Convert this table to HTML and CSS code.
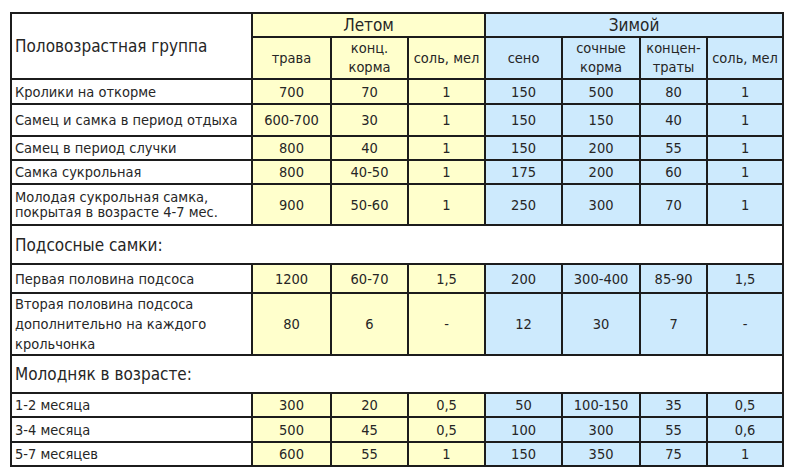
FILE: index.html
```html
<!DOCTYPE html>
<html lang="ru">
<head>
<meta charset="utf-8">
<title>Нормы кормления кроликов</title>
<link rel="stylesheet" href="styles.css">
</head>
<body>
<div class="page">
<table class="feed">
  <colgroup>
    <col class="c-group">
    <col class="c-w79">
    <col class="c-w77">
    <col class="c-w77">
    <col class="c-w77">
    <col class="c-w78">
    <col class="c-w67">
    <col class="c-w76">
  </colgroup>
  <tr class="r-season">
    <th rowspan="2" class="group-head">Половозрастная группа</th>
    <th colspan="3" class="summer season">Летом</th>
    <th colspan="4" class="winter season">Зимой</th>
  </tr>
  <tr class="r-sub">
    <th class="summer">трава</th>
    <th class="summer">конц.<br>корма</th>
    <th class="summer">соль, мел</th>
    <th class="winter">сено</th>
    <th class="winter">сочные<br>корма</th>
    <th class="winter">концен-<br>траты</th>
    <th class="winter">соль, мел</th>
  </tr>
  <tr class="r-25">
    <td class="name">Кролики на откорме</td>
    <td class="summer">700</td><td class="summer">70</td><td class="summer">1</td>
    <td class="winter">150</td><td class="winter">500</td><td class="winter">80</td><td class="winter">1</td>
  </tr>
  <tr class="r-32">
    <td class="name">Самец и самка в период отдыха</td>
    <td class="summer">600-700</td><td class="summer">30</td><td class="summer">1</td>
    <td class="winter">150</td><td class="winter">150</td><td class="winter">40</td><td class="winter">1</td>
  </tr>
  <tr class="r-24">
    <td class="name">Самец в период случки</td>
    <td class="summer">800</td><td class="summer">40</td><td class="summer">1</td>
    <td class="winter">150</td><td class="winter">200</td><td class="winter">55</td><td class="winter">1</td>
  </tr>
  <tr class="r-24">
    <td class="name">Самка сукрольная</td>
    <td class="summer">800</td><td class="summer">40-50</td><td class="summer">1</td>
    <td class="winter">175</td><td class="winter">200</td><td class="winter">60</td><td class="winter">1</td>
  </tr>
  <tr class="r-41">
    <td class="name two">Молодая сукрольная самка,<br>покрытая в возрасте 4-7 мес.</td>
    <td class="summer">900</td><td class="summer">50-60</td><td class="summer">1</td>
    <td class="winter">250</td><td class="winter">300</td><td class="winter">70</td><td class="winter">1</td>
  </tr>
  <tr class="r-39">
    <td colspan="8" class="section">Подсосные самки:</td>
  </tr>
  <tr class="r-29">
    <td class="name">Первая половина подсоса</td>
    <td class="summer">1200</td><td class="summer">60-70</td><td class="summer">1,5</td>
    <td class="winter">200</td><td class="winter">300-400</td><td class="winter">85-90</td><td class="winter">1,5</td>
  </tr>
  <tr class="r-62">
    <td class="name three">Вторая половина подсоса<br>дополнительно на каждого<br>крольчонка</td>
    <td class="summer">80</td><td class="summer">6</td><td class="summer">-</td>
    <td class="winter">12</td><td class="winter">30</td><td class="winter">7</td><td class="winter">-</td>
  </tr>
  <tr class="r-38">
    <td colspan="8" class="section">Молодняк в возрасте:</td>
  </tr>
  <tr class="r-24">
    <td class="name">1-2 месяца</td>
    <td class="summer">300</td><td class="summer">20</td><td class="summer">0,5</td>
    <td class="winter">50</td><td class="winter">100-150</td><td class="winter">35</td><td class="winter">0,5</td>
  </tr>
  <tr class="r-25">
    <td class="name">3-4 месяца</td>
    <td class="summer">500</td><td class="summer">45</td><td class="summer">0,5</td>
    <td class="winter">100</td><td class="winter">300</td><td class="winter">55</td><td class="winter">0,6</td>
  </tr>
  <tr class="r-24">
    <td class="name">5-7 месяцев</td>
    <td class="summer">600</td><td class="summer">55</td><td class="summer">1</td>
    <td class="winter">150</td><td class="winter">350</td><td class="winter">75</td><td class="winter">1</td>
  </tr>
</table>
</div>
</body>
</html>
```
FILE: styles.css
```css
html, body {
  margin: 0;
  padding: 0;
  background: #ffffff;
}

.page {
  padding: 12px 0 0 10px;
}

.feed {
  border-collapse: collapse;
  table-layout: fixed;
  width: 772px;
  font-family: "DejaVu Sans Condensed", "DejaVu Sans", Verdana, sans-serif;
  font-size: 14.5px;
  color: #262626;
  border: 2px solid #1c1c1c;
}

.c-group { width: 241px; }
.c-w79 { width: 79px; }
.c-w77 { width: 77px; }
.c-w78 { width: 78px; }
.c-w67 { width: 67px; }
.c-w76 { width: 76px; }

.feed th,
.feed td {
  border: 2px solid #1c1c1c;
  padding: 0;
  text-align: center;
  vertical-align: middle;
  font-weight: normal;
  line-height: 16px;
  white-space: nowrap;
  overflow: hidden;
}

.summer { background: #ffffcc; }
.winter { background: #cdeafd; }

.feed .group-head {
  text-align: left;
  padding-left: 3px;
  font-size: 17px;
  background: #ffffff;
}

.feed .season {
  font-size: 17px;
}

.r-sub th {
  line-height: 19px;
}

.feed .name {
  text-align: left;
  padding-left: 3px;
  background: #ffffff;
}

.feed .two { line-height: 15px; }
.feed .three { line-height: 20px; }

.feed .section {
  text-align: left;
  padding-left: 3px;
  font-size: 17px;
  background: #ffffff;
}

.r-season { height: 24px; }
.r-sub { height: 42px; }
.r-24 { height: 24px; }
.r-25 { height: 25px; }
.r-29 { height: 29px; }
.r-32 { height: 32px; }
.r-38 { height: 38px; }
.r-39 { height: 39px; }
.r-41 { height: 41px; }
.r-62 { height: 62px; }
```
